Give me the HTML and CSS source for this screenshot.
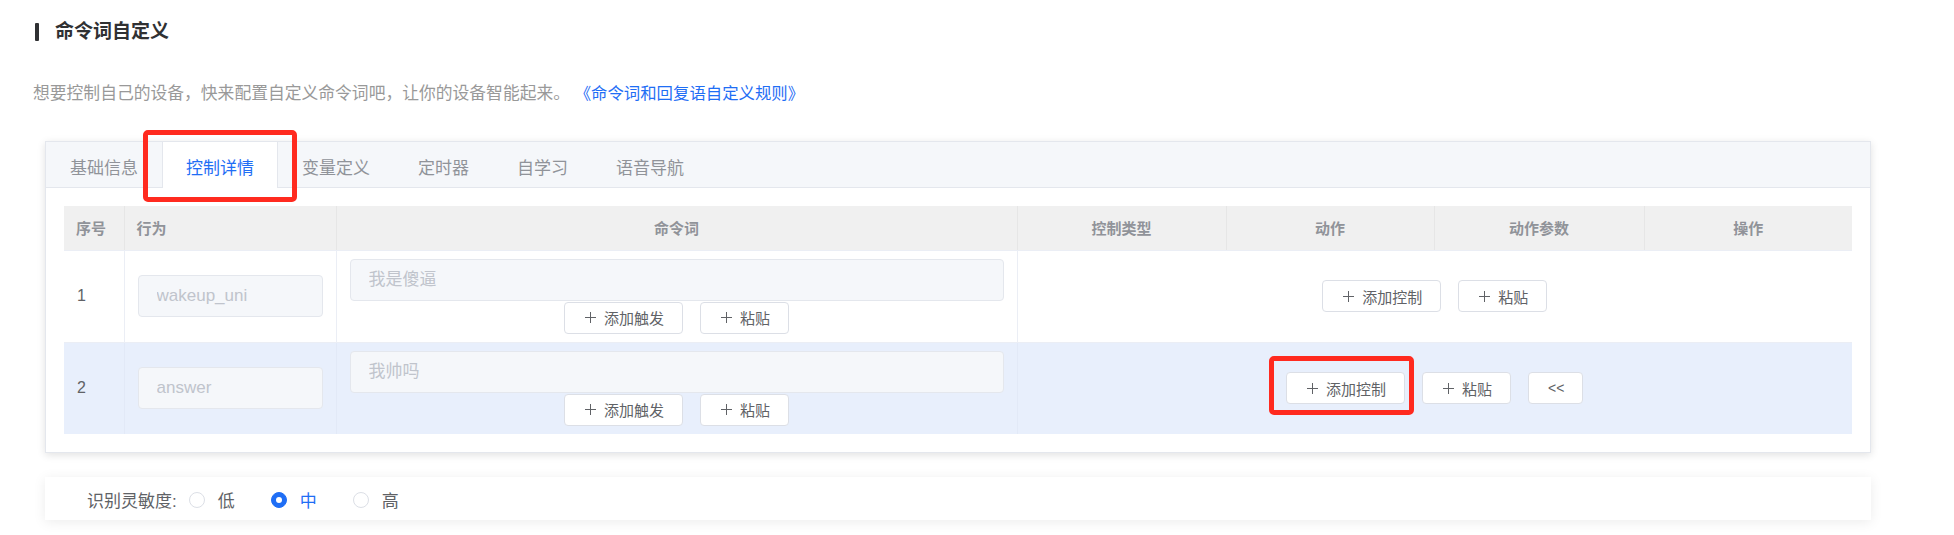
FILE: index.html
```html
<!DOCTYPE html>
<html lang="zh-CN">
<head>
<meta charset="utf-8">
<title>命令词自定义</title>
<link rel="stylesheet" href="styles.css">
</head>
<body>
<div class="page">
  <div class="title">
    <span class="title-bar"></span>
    <h2 class="title-text">命令词自定义</h2>
  </div>
  <p class="desc">想要控制自己的设备，快来配置自定义命令词吧，让你的设备智能起来。 <a class="link" href="#">《命令词和回复语自定义规则》</a></p>

  <div class="card">
    <div class="tabs">
      <div class="tab">基础信息</div>
      <div class="tab active">控制详情<span class="mark mark-tab"></span></div>
      <div class="tab">变量定义</div>
      <div class="tab">定时器</div>
      <div class="tab">自学习</div>
      <div class="tab">语音导航</div>
    </div>
    <div class="card-body">
      <table class="grid">
        <colgroup>
          <col class="c-no"><col class="c-act"><col class="c-cmd"><col class="c-type"><col class="c-do"><col class="c-param"><col class="c-op">
        </colgroup>
        <thead>
          <tr>
            <th class="left">序号</th>
            <th class="left">行为</th>
            <th>命令词</th>
            <th>控制类型</th>
            <th>动作</th>
            <th>动作参数</th>
            <th class="last">操作</th>
          </tr>
        </thead>
        <tbody>
          <tr class="row">
            <td class="num">1</td>
            <td class="pad"><input class="field" placeholder="wakeup_uni"></td>
            <td class="pad">
              <input class="field" placeholder="我是傻逼">
              <div class="btn-row">
                <button class="btn"><svg class="plus" width="11" height="11" viewBox="0 0 11 11"><path d="M5.5 0v11M0 5.5h11" stroke="currentColor" stroke-width="1"/></svg>添加触发</button>
                <button class="btn"><svg class="plus" width="11" height="11" viewBox="0 0 11 11"><path d="M5.5 0v11M0 5.5h11" stroke="currentColor" stroke-width="1"/></svg>粘贴</button>
              </div>
            </td>
            <td class="actions" colspan="4">
              <div class="act-row">
                <button class="btn"><svg class="plus" width="11" height="11" viewBox="0 0 11 11"><path d="M5.5 0v11M0 5.5h11" stroke="currentColor" stroke-width="1"/></svg>添加控制</button>
                <button class="btn"><svg class="plus" width="11" height="11" viewBox="0 0 11 11"><path d="M5.5 0v11M0 5.5h11" stroke="currentColor" stroke-width="1"/></svg>粘贴</button>
              </div>
            </td>
          </tr>
          <tr class="row hover">
            <td class="num">2</td>
            <td class="pad"><input class="field" placeholder="answer"></td>
            <td class="pad">
              <input class="field" placeholder="我帅吗">
              <div class="btn-row">
                <button class="btn"><svg class="plus" width="11" height="11" viewBox="0 0 11 11"><path d="M5.5 0v11M0 5.5h11" stroke="currentColor" stroke-width="1"/></svg>添加触发</button>
                <button class="btn"><svg class="plus" width="11" height="11" viewBox="0 0 11 11"><path d="M5.5 0v11M0 5.5h11" stroke="currentColor" stroke-width="1"/></svg>粘贴</button>
              </div>
            </td>
            <td class="actions" colspan="4">
              <div class="act-row">
                <button class="btn marked"><svg class="plus" width="11" height="11" viewBox="0 0 11 11"><path d="M5.5 0v11M0 5.5h11" stroke="currentColor" stroke-width="1"/></svg>添加控制<span class="mark mark-btn"></span></button>
                <button class="btn"><svg class="plus" width="11" height="11" viewBox="0 0 11 11"><path d="M5.5 0v11M0 5.5h11" stroke="currentColor" stroke-width="1"/></svg>粘贴</button>
                <button class="btn btn-back">&lt;&lt;</button>
              </div>
            </td>
          </tr>
        </tbody>
      </table>
    </div>
  </div>

  <div class="sens">
    <span class="sens-label">识别灵敏度:</span>
    <label class="radio"><span class="dot"></span><span class="radio-text">低</span></label>
    <label class="radio checked"><span class="dot"></span><span class="radio-text">中</span></label>
    <label class="radio"><span class="dot"></span><span class="radio-text">高</span></label>
  </div>
</div>
</body>
</html>
```

FILE: styles.css
```css
* { box-sizing: border-box; }

body {
  margin: 0;
  background: #ffffff;
  font-family: "Liberation Sans", "Noto Sans CJK SC", sans-serif;
  color: #606266;
}

.page {
  padding: 20px 83px 20px 33px;
}

.title {
  display: flex;
  align-items: center;
  height: 24px;
  margin-left: 2px;
}

.title-bar {
  width: 4px;
  height: 18px;
  background: #303133;
  border-radius: 1px;
}

.title-text {
  margin: 0 0 0 16px;
  font-size: 19px;
  font-weight: 700;
  line-height: 24px;
  color: #303133;
}

.desc {
  margin: 37px 0 0 0;
  font-size: 16.8px;
  line-height: 24px;
  color: #999999;
}

.link {
  font-size: 16.4px;
  color: #1f6ef5;
  text-decoration: none;
}

.card {
  margin: 35px 0 0 12px;
  border: 1px solid #e4e7ed;
  background: #fff;
  box-shadow: 0 2px 8px rgba(0, 0, 0, 0.12);
}

.tabs {
  display: flex;
  height: 46px;
  background: #f5f7fa;
  border-bottom: 1px solid #e4e7ed;
}

.tab {
  position: relative;
  display: flex;
  align-items: center;
  height: 45px;
  padding: 3px 24px 0;
  font-size: 17px;
  color: #909399;
}

.tab.active {
  height: 46px;
  padding: 3px 23px 0;
  background: #fff;
  color: #1f6ef5;
  border-left: 1px solid #e4e7ed;
  border-right: 1px solid #e4e7ed;
}

.mark {
  position: absolute;
  border: 5px solid #ff2a1f;
  border-radius: 5px;
  pointer-events: none;
}

.mark-tab {
  left: -20px;
  right: -20px;
  top: -12px;
  bottom: -14px;
}

.card-body {
  padding: 18px;
}

.grid {
  width: 1788px;
  border-collapse: collapse;
  table-layout: fixed;
}

.c-no { width: 60px; }
.c-act { width: 212px; }
.c-cmd { width: 681px; }
.c-type { width: 209px; }
.c-do { width: 208px; }
.c-param { width: 210px; }
.c-op { width: 208px; }

.grid th {
  height: 44px;
  padding: 0 12px;
  background: #f0f0f0;
  font-size: 15px;
  font-weight: 700;
  color: #909399;
  text-align: center;
  border-right: 1px solid #e6e6e6;
  border-bottom: 1px solid #ebeef5;
}

.grid th.left { text-align: left; }
.grid th.last { border-right: none; }

.grid td {
  padding: 8px 13px;
  vertical-align: middle;
  border-right: 1px solid #ebeef5;
  border-bottom: 1px solid #ebeef5;
}

.grid td.actions { border-right: none; }

.grid td.num {
  padding: 0 13px;
  font-size: 16px;
  color: #606266;
}

.row.hover td {
  background: #e8effc;
  border-bottom: none;
  border-right-color: #e2e9f7;
}

.field {
  display: block;
  width: 100%;
  height: 42px;
  padding: 0 18px;
  border: 1px solid #e4e7ed;
  border-radius: 4px;
  background: #f5f7fa;
  font-family: "Liberation Sans", "Noto Sans CJK SC", sans-serif;
  font-size: 17px;
  color: #c0c4cc;
  outline: none;
}

.field::placeholder { color: #c0c4cc; }

.btn-row {
  display: flex;
  justify-content: center;
  gap: 17px;
  margin-top: 1px;
}

.act-row {
  display: flex;
  justify-content: center;
  gap: 17px;
}

.btn {
  position: relative;
  display: inline-flex;
  align-items: center;
  height: 32px;
  padding: 0 18px 0 20px;
  border: 1px solid #dcdfe6;
  border-radius: 4px;
  background: #fff;
  font-family: "Liberation Sans", "Noto Sans CJK SC", sans-serif;
  font-size: 15px;
  color: #606266;
  cursor: pointer;
}

.plus {
  margin-right: 8px;
  color: #606266;
}

.btn-back {
  padding: 0 18px 0 19px;
  font-size: 14px;
}

.mark-btn {
  left: -18px;
  right: -10px;
  top: -17px;
  bottom: -12px;
}

.sens {
  display: flex;
  align-items: center;
  height: 43px;
  margin: 24px 0 0 12px;
  padding: 3px 0 0 42px;
  background: #fff;
  box-shadow: 0 2px 12px rgba(0, 0, 0, 0.08);
}

.sens-label {
  margin-right: 12px;
  font-size: 17px;
  color: #606266;
}

.radio {
  display: inline-flex;
  align-items: center;
  margin-right: 36px;
  font-size: 17px;
  color: #606266;
}

.dot {
  position: relative;
  width: 16px;
  height: 16px;
  border: 1px solid #dcdfe6;
  border-radius: 50%;
  background: #fff;
}

.radio-text { margin-left: 13px; }

.radio.checked .dot {
  background: #1f6ef5;
  border-color: #1f6ef5;
}

.radio.checked .dot::after {
  content: "";
  position: absolute;
  left: 4px;
  top: 4px;
  width: 6px;
  height: 6px;
  border-radius: 50%;
  background: #fff;
}

.radio.checked .radio-text { color: #1f6ef5; }
```
